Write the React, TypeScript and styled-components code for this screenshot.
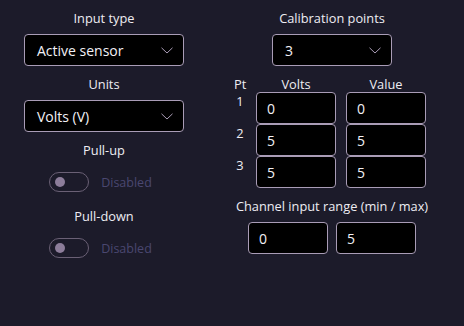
import React from "react";
import styled, { createGlobalStyle } from "styled-components";

const GlobalStyle = createGlobalStyle`
  html, body {
    margin: 0;
    padding: 0;
    background: #1c1b2a;
  }
  body {
    width: 464px;
    height: 326px;
    overflow: hidden;
    font-family: "Open Sans", "Noto Sans", sans-serif;
    color: #eeedf3;
  }
`;

const Page = styled.div`
  display: grid;
  grid-template-columns: 160px 200px;
  column-gap: 48px;
  padding: 9px 0 0 24px;
`;

const Column = styled.div`
  display: flex;
  flex-direction: column;
  align-items: center;
`;

const Label = styled.div<{ $mt?: number }>`
  font-size: 12.8px;
  line-height: 18px;
  height: 18px;
  margin-top: ${(p) => p.$mt ?? 0}px;
  text-align: center;
  white-space: nowrap;
`;

const SelectBox = styled.div<{ $w: number }>`
  box-sizing: border-box;
  width: ${(p) => p.$w}px;
  height: 32px;
  margin-top: 7px;
  background: #000;
  border: 1px solid #a99cb6;
  border-radius: 4px;
  display: flex;
  align-items: center;
  justify-content: space-between;
  padding: 0 10px 0 12px;
  font-size: 14px;
  color: #f2f1f6;
`;

const Chevron = () => (
  <svg width="12" height="7" viewBox="0 0 12 7" fill="none">
    <path d="M0.5 0.8 L6 6 L11.5 0.8" stroke="#a99cb6" strokeWidth="1" />
  </svg>
);

const Select = ({ value, width }: { value: string; width: number }) => (
  <SelectBox $w={width}>
    <span>{value}</span>
    <Chevron />
  </SelectBox>
);

const ToggleRow = styled.div`
  display: flex;
  align-items: center;
  gap: 12px;
  height: 20px;
  margin-top: 13px;
  padding-right: 7px;
`;

const Track = styled.div`
  box-sizing: border-box;
  width: 40px;
  height: 20px;
  border: 1.5px solid #6a6075;
  border-radius: 10px;
  display: flex;
  align-items: center;
  padding-left: 5px;
`;

const Knob = styled.div`
  width: 10px;
  height: 10px;
  border-radius: 50%;
  background: #8c7d9a;
`;

const DisabledText = styled.span`
  font-size: 12.5px;
  color: #4a4770;
`;

const Toggle = () => (
  <ToggleRow>
    <Track>
      <Knob />
    </Track>
    <DisabledText>Disabled</DisabledText>
  </ToggleRow>
);

const CalTable = styled.div`
  display: grid;
  grid-template-columns: 12px 80px 80px;
  column-gap: 10px;
  align-self: flex-start;
  margin: 10px 0 0 2px;
`;

const HeadCell = styled.div`
  font-size: 12.8px;
  line-height: 16px;
  text-align: center;
  white-space: nowrap;
`;

const RowNum = styled.div`
  font-size: 12.8px;
  line-height: 18px;
  text-align: center;
  align-self: start;
`;

const Field = styled.div<{ $w?: number }>`
  box-sizing: border-box;
  width: ${(p) => p.$w ?? 80}px;
  height: 32px;
  background: #000;
  border: 1px solid #a99cb6;
  border-radius: 4px;
  display: flex;
  align-items: center;
  padding-left: 10px;
  font-size: 14px;
  color: #f2f1f6;
`;

const RangeRow = styled.div`
  display: flex;
  gap: 8px;
  margin-top: 7px;
`;

const points = [
  { pt: 1, volts: "0", value: "0" },
  { pt: 2, volts: "5", value: "5" },
  { pt: 3, volts: "5", value: "5" },
];

export default function App() {
  return (
    <>
      <GlobalStyle />
      <Page>
        <Column>
          <Label>Input type</Label>
          <Select value="Active sensor" width={160} />
          <Label $mt={9}>Units</Label>
          <Select value="Volts (V)" width={160} />
          <Label $mt={9}>Pull-up</Label>
          <Toggle />
          <Label $mt={15}>Pull-down</Label>
          <Toggle />
        </Column>
        <Column>
          <Label>Calibration points</Label>
          <Select value="3" width={120} />
          <CalTable>
            <HeadCell>Pt</HeadCell>
            <HeadCell>Volts</HeadCell>
            <HeadCell>Value</HeadCell>
            {points.map((p) => (
              <React.Fragment key={p.pt}>
                <RowNum>{p.pt}</RowNum>
                <Field>{p.volts}</Field>
                <Field>{p.value}</Field>
              </React.Fragment>
            ))}
          </CalTable>
          <Label $mt={9}>Channel input range (min / max)</Label>
          <RangeRow>
            <Field>0</Field>
            <Field>5</Field>
          </RangeRow>
        </Column>
      </Page>
    </>
  );
}
